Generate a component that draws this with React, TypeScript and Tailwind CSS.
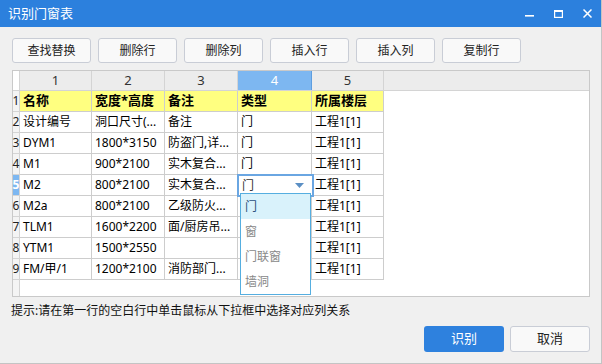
import React from "react"

const rows = [
  ["名称", "宽度*高度", "备注", "类型", "所属楼层"],
  ["设计编号", "洞口尺寸(...", "备注", "门", "工程1[1]"],
  ["DYM1", "1800*3150", "防盗门,详...", "门", "工程1[1]"],
  ["M1", "900*2100", "实木复合...", "门", "工程1[1]"],
  ["M2", "800*2100", "实木复合...", "门", "工程1[1]"],
  ["M2a", "800*2100", "乙级防火...", "", "工程1[1]"],
  ["TLM1", "1600*2200", "面/厨房吊...", "", "工程1[1]"],
  ["YTM1", "1500*2550", "", "", "工程1[1]"],
  ["FM/甲/1", "1200*2100", "消防部门...", "", "工程1[1]"],
]

const colW = ["w-[72px]", "w-[73px]", "w-[73px]", "w-[74px]", "w-[72px]"]

const tools = ["查找替换", "删除行", "删除列", "插入行", "插入列", "复制行"]

function ToolButton({ label }: { label: string }) {
  return (
    <button className="w-[79px] h-[25px] rounded-[3px] border border-[#c9cdd6] bg-[#f9f9f9] text-[12px] text-[#222]">
      {label}
    </button>
  )
}

export default function App() {
  return (
    <div
      className="w-[602px] h-[364px] bg-[#f0f0f0] flex flex-col border-r border-b border-[#c4c4c4] overflow-hidden"
      style={{ fontFamily: '"Noto Sans", "Noto Sans CJK SC", sans-serif' }}
    >
      {/* title bar */}
      <div className="h-[27px] shrink-0 bg-[#2c80dd] flex items-center pl-[8px] text-white text-[13px]">
        <span>识别门窗表</span>
        <div className="ml-auto flex items-center gap-[20px] pr-[9px]">
          <svg width="9" height="9" viewBox="0 0 9 9">
            <rect x="0" y="6" width="9" height="1.6" fill="white" />
          </svg>
          <svg width="9" height="8" viewBox="0 0 9 8">
            <rect x="0.6" y="0.6" width="7.8" height="6.8" fill="none" stroke="white" strokeWidth="1.2" />
            <rect x="0" y="0" width="9" height="2" fill="white" />
          </svg>
          <svg width="9" height="9" viewBox="0 0 9 9">
            <path d="M0.5 0.5 L8.5 8.5 M8.5 0.5 L0.5 8.5" stroke="white" strokeWidth="1.5" />
          </svg>
        </div>
      </div>

      {/* toolbar */}
      <div className="mt-[11px] ml-[12px] flex gap-[7px]">
        {tools.map((t) => (
          <ToolButton key={t} label={t} />
        ))}
      </div>

      {/* grid */}
      <div className="relative mt-[7px] ml-[12px] w-[578px] h-[227px] border border-[#c9c9c9] bg-white flex flex-col text-[12px] text-black">
        <div className="flex h-[20px] border-b border-[#d4d4d4] shrink-0">
          <div className="w-[7px] border-r border-[#d4d4d4] bg-white" />
          {[1, 2, 3, 4, 5].map((n, i) => (
            <div
              key={n}
              className={`${colW[i]} flex items-center justify-center border-r text-[13px] ${
                n === 4
                  ? "bg-[#7db7f1] border-[#5e9ee0] text-white"
                  : "bg-[#ececec] border-[#d4d4d4] text-[#333]"
              }`}
            >
              {n}
            </div>
          ))}
          <div className="flex-1 bg-[#ececec]" />
        </div>

        {rows.map((r, ri) => (
          <div key={ri} className="flex h-[21px] shrink-0">
            <div
              className={`w-[7px] flex items-center justify-center border-r border-b border-[#d4d4d4] text-[12px] overflow-visible ${
                ri === 4 ? "bg-[#7db7f1] text-white font-bold" : "bg-[#f4f4f4] text-[#222]"
              }`}
            >
              {ri + 1}
            </div>
            {r.map((c, ci) => (
              <div
                key={ci}
                className={`${colW[ci]} flex items-center pl-[3px] border-r border-b border-[#cdcdcd] whitespace-nowrap overflow-hidden ${
                  ri === 0 ? "bg-[#ffff80] font-bold text-[13px]" : ""
                }`}
              >
                {ri === 4 && ci === 3 ? "" : c}
              </div>
            ))}
            <div className="flex-1" />
          </div>
        ))}
        <div className="flex flex-1">
          <div className="w-[7px] border-r border-[#d4d4d4] bg-[#f4f4f4]" />
        </div>

        {/* selected cell editor */}
        <div className="absolute left-[224px] top-[103px] w-[77px] h-[23px] border-2 border-[#6aa6e2] bg-white flex items-center pl-[3px]">
          <span className="text-[#333]">门</span>
          <svg className="ml-auto mr-[8px]" width="9" height="5" viewBox="0 0 9 5">
            <path d="M0 0 L9 0 L4.5 5 Z" fill="#5b8fc4" />
          </svg>
        </div>

        {/* dropdown list */}
        <div className="absolute left-[227px] top-[122px] w-[71px] h-[102px] border border-[#55aee0] bg-white flex flex-col text-[12px]">
          <div className="h-[25px] bg-[#d9f2fb] flex items-center pl-[4px] text-[#2a4e7a]">门</div>
          <div className="h-[25px] flex items-center pl-[4px] text-[#888]">窗</div>
          <div className="h-[25px] flex items-center pl-[4px] text-[#888]">门联窗</div>
          <div className="h-[25px] flex items-center pl-[4px] text-[#888]">墙洞</div>
        </div>
      </div>

      {/* hint */}
      <div className="mt-[6px] ml-[11px] text-[12px] text-[#111] leading-[16px]">
        提示:请在第一行的空白行中单击鼠标从下拉框中选择对应列关系
      </div>

      {/* bottom buttons */}
      <div className="mt-[7px] flex justify-end gap-[6px] pr-[11px]">
        <button className="w-[80px] h-[26px] rounded-[3px] bg-[#2e81de] text-white text-[13px]">识别</button>
        <button className="w-[80px] h-[26px] rounded-[3px] border border-[#c9cdd6] bg-[#f9f9f9] text-[13px] text-[#222]">
          取消
        </button>
      </div>
    </div>
  )
}
